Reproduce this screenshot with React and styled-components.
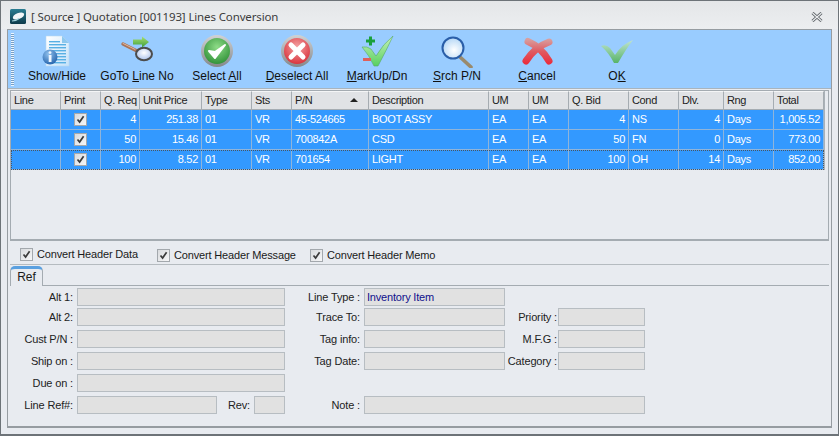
import React from 'react';
import styled, { createGlobalStyle } from 'styled-components';

const GlobalStyle = createGlobalStyle`
  html, body { margin: 0; padding: 0; background: #e8ebf0; }
  body { font-family: "Liberation Sans", Arial, sans-serif; font-size: 11px; color: #1a1a1a; }
`;

// window frame
const Window = styled.div`
  width: 839px;
  height: 436px;
  box-sizing: border-box;
  border: 1px solid #6d7378;
  border-bottom-width: 2px;
  background: #e8ebf0;
  display: flex;
  flex-direction: column;
  overflow: hidden;
`;

const TitleBar = styled.div`
  height: 28px;
  flex: none;
  display: flex;
  align-items: center;
  gap: 5px;
  padding: 3px 15px 0 9px;
  box-sizing: border-box;
  background: linear-gradient(#e4e6e8, #eceef0);
`;

const Title = styled.div`
  flex: 1;
  font-family: "Noto Sans", sans-serif;
  font-size: 11.5px;
  letter-spacing: -0.13px;
  color: #3c3c3c;
  white-space: nowrap;
`;

const Body = styled.div`
  flex: 1;
  margin: 0 6px 6px 6px;
  border: 1px solid #969ca1;
  border-bottom-width: 2px;
  display: flex;
  flex-direction: column;
  min-height: 0;
`;

// toolbar
const Toolbar = styled.div`
  height: 59px;
  flex: none;
  display: flex;
  box-sizing: border-box;
  background: #99ccff;
  border-bottom: 1px solid #a9b4bd;
`;

const Gripper = styled.div`
  width: 3px;
  margin: 3px 3px 2px 3px;
  background: repeating-linear-gradient(#ffffff 0 1px, #6f94b8 1px 2px);
  opacity: 0.8;
`;

const ToolButton = styled.div`
  width: 80px;
  flex: none;
  display: flex;
  flex-direction: column;
  align-items: center;
  padding-top: 4px;
  box-sizing: border-box;
  font-size: 12px;
  color: #111;
  white-space: nowrap;
  svg { display: block; margin-bottom: 1px; }
`;

// grid
const GridPanel = styled.div`
  height: 151px;
  flex: none;
  margin: 1px 2px 0 2px;
  border: 1px solid #a4abb1;
  border-bottom-width: 2px;
  padding-right: 4px;
  box-sizing: border-box;
`;

const Table = styled.table`
  border-collapse: separate;
  border-spacing: 0;
  table-layout: fixed;
  width: 813px;
  border-right: 1px solid #aab1b7;
`;

const HeadCell = styled.th`
  height: 19px;
  padding: 0 3px 1px;
  box-sizing: border-box;
  background: #e0e2e5;
  border-top: 1px solid #f4f5f6;
  border-right: 1px solid #a5acb2;
  border-bottom: 1px solid #a5acb2;
  font-weight: normal;
  font-size: 11px;
  letter-spacing: -0.35px;
  color: #222;
  text-align: left;
  white-space: nowrap;
  overflow: hidden;
`;

const SortHead = styled.div`
  display: flex;
  align-items: center;
  justify-content: space-between;
  padding-right: 7px;
`;

const SortArrow = styled.span`
  width: 0;
  height: 0;
  border-left: 4px solid transparent;
  border-right: 4px solid transparent;
  border-bottom: 4px solid #222;
`;

const Row = styled.tr`
  background: #3399ff;
  outline: ${(p) => (p.$focused ? '1px dotted #4a5560' : 'none')};
  outline-offset: -1px;
`;

const Cell = styled.td`
  height: 20px;
  padding: 0 3px 1px;
  box-sizing: border-box;
  border-right: 1px solid #8fb4da;
  border-bottom: 1px solid #8fb4da;
  color: #fff;
  font-size: 11px;
  letter-spacing: -0.3px;
  text-align: ${(p) => (p.$right ? 'right' : 'left')};
  white-space: nowrap;
  overflow: hidden;
`;

const CheckCell = styled(Cell)`
  padding: 0;
  > span { margin: 0 auto; }
`;

const CheckBox = styled.span`
  display: block;
  width: 11px;
  height: 11px;
  flex: none;
  border: 1px solid #a3a8ad;
  background: linear-gradient(135deg, #d9dbde, #f6f6f7);
  svg { display: block; }
`;

// options row
const OptionsRow = styled.div`
  height: 24px;
  flex: none;
  box-sizing: border-box;
  margin: 0 2px;
  padding: 0 0 0 10px;
  display: flex;
  align-items: center;
  border-bottom: 1px solid #b5bbc0;
`;

const Option = styled.label`
  display: flex;
  align-items: center;
  gap: 4px;
  font-size: 11px;
  letter-spacing: -0.16px;
  width: ${(p) => p.$width}px;
  flex: none;
  margin-top: ${(p) => p.$top}px;
  white-space: nowrap;
`;

// tab strip
const TabStrip = styled.div`
  height: 21px;
  flex: none;
  margin: 0 2px;
  display: flex;
  align-items: flex-end;
  border-bottom: 1px solid #a4abb1;
  box-sizing: border-box;
`;

const Tab = styled.div`
  width: 33px;
  height: 20px;
  margin-bottom: -1px;
  box-sizing: border-box;
  border: 1px solid #a4abb1;
  border-top: 3px solid #5aa0e0;
  border-bottom: none;
  border-radius: 5px 5px 0 0;
  background: #e8ebf0;
  text-align: center;
  font-size: 12px;
  line-height: 17px;
`;

// form below the tab
const Form = styled.div`
  display: grid;
  grid-template-columns: 67px 140px 37px 31px 79px 141px 53px 87px;
  grid-template-rows: 20px 22px 22px 22px 22px 18px;
  padding: 2px 0 0 2px;
`;

const Label = styled.div`
  grid-column: ${(p) => p.$col};
  grid-row: ${(p) => p.$row};
  height: 18px;
  line-height: 18px;
  text-align: right;
  padding-right: ${(p) => p.$pad ?? 4}px;
  font-size: 11px;
  letter-spacing: -0.15px;
  color: #222;
  white-space: nowrap;
`;

const Field = styled.div`
  grid-column: ${(p) => p.$col};
  grid-row: ${(p) => p.$row};
  height: 18px;
  box-sizing: border-box;
  border: 1px solid #b7bdc2;
  background: #e1e1e1;
  padding-left: 2px;
  line-height: 17px;
  font-size: 11px;
  letter-spacing: -0.2px;
  color: #10108c;
`;

const rows = [
  ['4', '251.38', '01', 'VR', '45-524665', 'BOOT ASSY', 'EA', 'EA', '4', 'NS', '4', 'Days', '1,005.52'],
  ['50', '15.46', '01', 'VR', '700842A', 'CSD', 'EA', 'EA', '50', 'FN', '0', 'Days', '773.00'],
  ['100', '8.52', '01', 'VR', '701654', 'LIGHT', 'EA', 'EA', '100', 'OH', '14', 'Days', '852.00'],
];

const columns = [
  ['Line', 50], ['Print', 40], ['Q. Req', 39], ['Unit Price', 62], ['Type', 50], ['Sts', 40], ['P/N', 77],
  ['Description', 120], ['UM', 40], ['UM', 40], ['Q. Bid', 60], ['Cond', 50], ['Dlv.', 45], ['Rng', 50], ['Total', 50],
];

const rightAligned = [0, 1, 8, 10, 12];

const Tick = () => (
  <svg width="11" height="11" viewBox="0 0 11 11">
    <path d="M2.5 5.5 L4.6 8 L8.6 2.2" fill="none" stroke="#3a3a3a" strokeWidth="1.7" />
  </svg>
);

const AppIcon = () => (
  <svg width="16" height="15" viewBox="0 0 16 15">
    <defs>
      <linearGradient id="appbg" x1="0" y1="0" x2="0" y2="1">
        <stop offset="0" stopColor="#2a7d92" />
        <stop offset="1" stopColor="#0d3a4a" />
      </linearGradient>
    </defs>
    <rect width="16" height="15" rx="1.5" fill="url(#appbg)" />
    <ellipse cx="8.5" cy="7" rx="6" ry="3" transform="rotate(-22 8.5 7)" fill="#f2f6f8" />
    <path d="M2 12 Q6 12 9 9.5" stroke="#9fd0da" strokeWidth="1.2" fill="none" />
  </svg>
);

const CloseIcon = () => (
  <svg width="12" height="10" viewBox="0 0 12 10">
    <path d="M1.5 1 L10.5 9 M10.5 1 L1.5 9" stroke="#5a5f64" strokeWidth="3" />
    <path d="M1.5 1 L10.5 9 M10.5 1 L1.5 9" stroke="#eceef0" strokeWidth="1.2" />
  </svg>
);

const Icon = ({ children }) => (
  <svg width="34" height="34" viewBox="0 0 34 34">{children}</svg>
);

const ShowHideIcon = () => (
  <Icon>
    <defs>
      <linearGradient id="doc" x1="0" y1="0" x2="1" y2="1">
        <stop offset="0" stopColor="#ffffff" />
        <stop offset="1" stopColor="#c4e2fa" />
      </linearGradient>
      <radialGradient id="info" cx="0.4" cy="0.3" r="0.8">
        <stop offset="0" stopColor="#8fc0ec" />
        <stop offset="1" stopColor="#1c5ca8" />
      </radialGradient>
    </defs>
    <path d="M6 2 H22 L29 9 V32 H6 Z" fill="url(#doc)" stroke="#b8d8f0" strokeWidth="0.6" />
    <path d="M22 2 L29 9 H22 Z" fill="#8ec8ee" />
    {[7, 10, 13, 16, 19, 22, 25, 28].map((y) => (
      <rect key={y} x="9" y={y} width={y < 10 ? 11 : 17} height="1.4" fill="#58b0e4" />
    ))}
    <circle cx="10" cy="23" r="7.5" fill="url(#info)" />
    <circle cx="10" cy="18.6" r="1.4" fill="#eef6ff" />
    <rect x="8.7" y="21" width="2.8" height="7" fill="#eef6ff" />
  </Icon>
);

const GotoIcon = () => (
  <Icon>
    <defs>
      <linearGradient id="arrow" x1="0" y1="0" x2="0" y2="1">
        <stop offset="0" stopColor="#a8e070" />
        <stop offset="1" stopColor="#3e9e3a" />
      </linearGradient>
      <radialGradient id="lens1" cx="0.5" cy="0.4" r="0.7">
        <stop offset="0" stopColor="#ffffff" />
        <stop offset="1" stopColor="#9db8e8" />
      </radialGradient>
    </defs>
    <path d="M3 10 L17 17" stroke="#a8745a" strokeWidth="3.4" strokeLinecap="round" />
    <path d="M3 9.4 L15 15.4" stroke="#e0b8a0" strokeWidth="1" strokeLinecap="round" />
    <ellipse cx="24" cy="20" rx="8" ry="6.2" fill="url(#lens1)" stroke="#4c4c4c" strokeWidth="2" />
    <path d="M13 5.5 H22 V2.5 L29 8 L22 13.5 V10.5 H13 Z" fill="url(#arrow)" />
  </Icon>
);

const RoundIcon = ({ id, light, dark, children }) => (
  <Icon>
    <defs>
      <radialGradient id={id} cx="0.5" cy="0.35" r="0.7">
        <stop offset="0" stopColor={light} />
        <stop offset="1" stopColor={dark} />
      </radialGradient>
      <linearGradient id={id + 'r'} x1="0" y1="0" x2="0" y2="1">
        <stop offset="0" stopColor="#d0d2d4" />
        <stop offset="1" stopColor="#85888b" />
      </linearGradient>
    </defs>
    <circle cx="17" cy="17" r="16" fill={`url(#${id}r)`} />
    <circle cx="17" cy="17" r="13" fill={`url(#${id})`} />
    {children}
  </Icon>
);

const SelectIcon = () => (
  <RoundIcon id="sel" light="#8fdc88" dark="#2c8e34">
    <path d="M9 17 L15 24 L25 11 L15 18 Z" fill="#fff" stroke="#fff" strokeWidth="2" strokeLinejoin="round" />
  </RoundIcon>
);

const DeselectIcon = () => (
  <RoundIcon id="desel" light="#f4a4a4" dark="#d82c36">
    <path d="M11 11 L23 23 M23 11 L11 23" stroke="#fff" strokeWidth="5" strokeLinecap="round" />
  </RoundIcon>
);

const MarkupIcon = () => (
  <Icon>
    <defs>
      <linearGradient id="mk" x1="0" y1="0" x2="0" y2="1">
        <stop offset="0" stopColor="#c8f2b8" />
        <stop offset="1" stopColor="#58d060" />
      </linearGradient>
    </defs>
    <path d="M2 13 Q7 12 11 15 L16 22 Q23 10 33 2 Q27 15 18 32 L14 32 Q9 21 2 13 Z" fill="url(#mk)" stroke="#58a868" strokeWidth="0.6" />
    <path d="M6 7 H15 M10.5 2.5 V11.5" stroke="#1aa03c" strokeWidth="3" />
    <rect x="3" y="24" width="8" height="3" fill="#e0605a" />
  </Icon>
);

const SearchIcon = () => (
  <Icon>
    <defs>
      <radialGradient id="lens2" cx="0.55" cy="0.6" r="0.7">
        <stop offset="0" stopColor="#ffffff" />
        <stop offset="1" stopColor="#a8d0f4" />
      </radialGradient>
    </defs>
    <path d="M20 23 L31 33" stroke="#9a8a6c" strokeWidth="3.6" strokeLinecap="round" />
    <circle cx="13" cy="14" r="10.5" fill="url(#lens2)" stroke="#2a5ea8" strokeWidth="2" />
  </Icon>
);

const CancelIcon = () => (
  <Icon>
    <defs>
      <linearGradient id="cx" gradientUnits="userSpaceOnUse" x1="0" y1="5" x2="0" y2="30">
        <stop offset="0" stopColor="#d8a0a0" />
        <stop offset="0.5" stopColor="#e05a60" />
        <stop offset="1" stopColor="#ea2c3c" />
      </linearGradient>
    </defs>
    <path d="M8 7.5 Q21 13 29 27" stroke="url(#cx)" strokeWidth="7" fill="none" strokeLinecap="round" />
    <path d="M29 8 Q15 13 6 27" stroke="url(#cx)" strokeWidth="7" fill="none" strokeLinecap="round" />
  </Icon>
);

const OkIcon = () => (
  <Icon>
    <defs>
      <linearGradient id="ok" x1="0" y1="0" x2="0" y2="1">
        <stop offset="0" stopColor="#c0e4d0" />
        <stop offset="1" stopColor="#58b468" />
      </linearGradient>
    </defs>
    <path d="M1 12 Q6 10 10 14 L15 21 Q22 10 33 6 Q26 15 18 29 L14 29 Q9 19 1 12 Z" fill="url(#ok)" />
  </Icon>
);

const tools = [
  { icon: <ShowHideIcon />, label: 'Show/Hide' },
  { icon: <GotoIcon />, label: <>GoTo <u>L</u>ine No</> },
  { icon: <SelectIcon />, label: <>Select <u>A</u>ll</> },
  { icon: <DeselectIcon />, label: <><u>D</u>eselect All</> },
  { icon: <MarkupIcon />, label: <><u>M</u>arkUp/Dn</> },
  { icon: <SearchIcon />, label: <><u>S</u>rch P/N</> },
  { icon: <CancelIcon />, label: <><u>C</u>ancel</> },
  { icon: <OkIcon />, label: <>O<u>K</u></> },
];

export default function App() {
  return (
    <Window>
      <GlobalStyle />
      <TitleBar>
        <AppIcon />
        <Title>[ Source ] Quotation [001193] Lines Conversion</Title>
        <CloseIcon />
      </TitleBar>
      <Body>
        <Toolbar>
          <Gripper />
          {tools.map((t, i) => (
            <ToolButton key={i}>
              {t.icon}
              <span>{t.label}</span>
            </ToolButton>
          ))}
        </Toolbar>

        <GridPanel>
          <Table>
            <colgroup>
              {columns.map(([, w], i) => <col key={i} style={{ width: w }} />)}
            </colgroup>
            <thead>
              <tr>
                {columns.map(([name], i) => (
                  <HeadCell key={i}>
                    {name === 'P/N' ? <SortHead>{name}<SortArrow /></SortHead> : name}
                  </HeadCell>
                ))}
              </tr>
            </thead>
            <tbody>
              {rows.map((r, i) => (
                <Row key={i} $focused={i === 2}>
                  <Cell />
                  <CheckCell><CheckBox><Tick /></CheckBox></CheckCell>
                  {r.map((v, j) => <Cell key={j} $right={rightAligned.includes(j)}>{v}</Cell>)}
                </Row>
              ))}
            </tbody>
          </Table>
        </GridPanel>

        <OptionsRow>
          <Option $width={137} $top={3}><CheckBox><Tick /></CheckBox>Convert Header Data</Option>
          <Option $width={153} $top={5}><CheckBox><Tick /></CheckBox>Convert Header Message</Option>
          <Option $width={140} $top={5}><CheckBox><Tick /></CheckBox>Convert Header Memo</Option>
        </OptionsRow>

        <TabStrip><Tab>Ref</Tab></TabStrip>

        <Form>
          <Label $col="1" $row="1">Alt 1:</Label>
          <Field $col="2 / 5" $row="1" />
          <Label $col="1" $row="2">Alt 2:</Label>
          <Field $col="2 / 5" $row="2" />
          <Label $col="1" $row="3">Cust P/N :</Label>
          <Field $col="2 / 5" $row="3" />
          <Label $col="1" $row="4">Ship on :</Label>
          <Field $col="2 / 5" $row="4" />
          <Label $col="1" $row="5">Due on :</Label>
          <Field $col="2 / 5" $row="5" />
          <Label $col="1" $row="6">Line Ref#:</Label>
          <Field $col="2" $row="6" />
          <Label $col="3" $row="6">Rev:</Label>
          <Field $col="4" $row="6" />

          <Label $col="5" $row="1">Line Type :</Label>
          <Field $col="6" $row="1">Inventory Item</Field>
          <Label $col="5" $row="2">Trace To:</Label>
          <Field $col="6" $row="2" />
          <Label $col="5" $row="3">Tag info:</Label>
          <Field $col="6" $row="3" />
          <Label $col="5" $row="4">Tag Date:</Label>
          <Field $col="6" $row="4" />
          <Label $col="5" $row="6">Note :</Label>
          <Field $col="6 / 9" $row="6" />

          <Label $col="7" $row="2" $pad={1}>Priority :</Label>
          <Field $col="8" $row="2" />
          <Label $col="7" $row="3" $pad={1}>M.F.G :</Label>
          <Field $col="8" $row="3" />
          <Label $col="7" $row="4" $pad={1}>Category :</Label>
          <Field $col="8" $row="4" />
        </Form>
      </Body>
    </Window>
  );
}
